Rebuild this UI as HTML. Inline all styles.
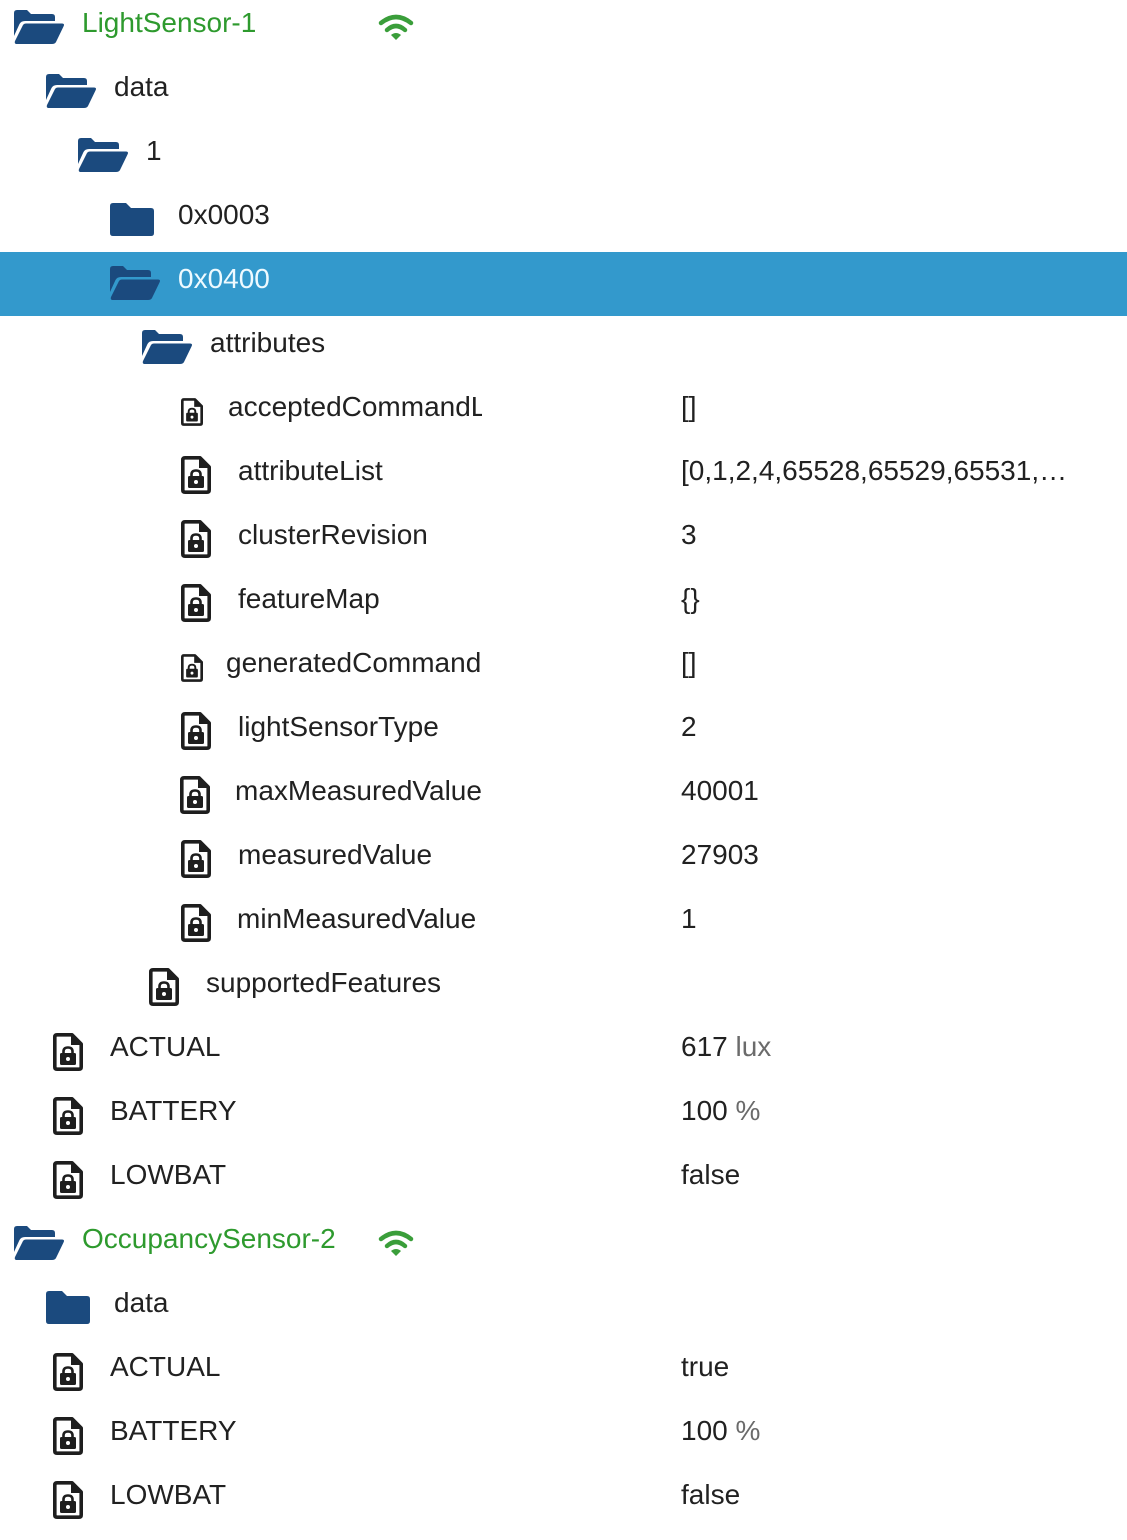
<!DOCTYPE html>
<html><head><meta charset="utf-8"><style>
html,body{margin:0;padding:0;background:#fff;width:1127px;height:1540px;overflow:hidden;position:relative;font-family:"Liberation Sans",sans-serif;}
.t{position:absolute;font-size:28px;line-height:64px;height:64px;padding-top:1px;color:#212121;white-space:nowrap;overflow:hidden;}
.g{color:#2e9a2e;}
.u{color:#6b6b6b;}
svg{position:absolute;}
.hl{position:absolute;left:0;top:252px;width:1127px;height:64px;background:#3399cc;}
</style></head><body>
<svg width="0" height="0" style="position:absolute">
<defs>
<symbol id="fo" viewBox="0 0 50 34"><path fill="#1b4a7e" d="M0 3Q0 0 3 0H13L17 4H38Q41 4 41 7V11H11Q7 11 5.5 14L0 26Z"/><path fill="#1b4a7e" d="M9 15Q10 13.5 12 13.5H48Q51 13.5 49.5 16.5L42 32Q41 34 38 34H3Q0 34 1 31Z"/></symbol>
<symbol id="fc" viewBox="0 0 44 33"><path fill="#1b4a7e" d="M0 3Q0 0 3 0H16L21 5H41Q44 5 44 8V30Q44 33 41 33H3Q0 33 0 30Z"/></symbol>
<symbol id="fl" viewBox="0 0 30 38"><path fill="none" stroke="#1e1e1e" stroke-width="3.6" stroke-linejoin="round" d="M4 1.8H19L28.2 11V34Q28.2 36.2 26 36.2H4Q1.8 36.2 1.8 34V4Q1.8 1.8 4 1.8Z"/><path fill="#1e1e1e" d="M18 2L28 12H18Z"/><path fill="none" stroke="#1e1e1e" stroke-width="2.6" d="M10.5 21V18.5Q10.5 14.5 15 14.5Q19.5 14.5 19.5 18.5V21"/><rect x="7" y="20" width="16" height="12" rx="1.5" fill="#1e1e1e"/><circle cx="15" cy="26" r="2" fill="#fff"/></symbol>
<symbol id="wf" viewBox="0 0 36 26"><path fill="none" stroke="#3a9e3a" stroke-width="4.5" stroke-linecap="round" d="M3 9Q18 -3 33 9"/><path fill="none" stroke="#3a9e3a" stroke-width="4.5" stroke-linecap="round" d="M9 16Q18 8 27 16"/><path fill="#3a9e3a" d="M13 21Q18 17 23 21L18 26Z"/></symbol>
</defs></svg>

<div class="hl"></div>

<svg style="left:14px;top:10px" width="50" height="34"><use href="#fo"/></svg>
<div class="t g" style="left:82px;top:-10px">LightSensor-1</div>
<svg style="left:378px;top:14px" width="36" height="26"><use href="#wf"/></svg>
<svg style="left:46px;top:74px" width="50" height="34"><use href="#fo"/></svg>
<div class="t" style="left:114px;top:54px">data</div>
<svg style="left:78px;top:138px" width="50" height="34"><use href="#fo"/></svg>
<div class="t" style="left:146px;top:118px">1</div>
<svg style="left:110px;top:203px" width="44" height="33"><use href="#fc"/></svg>
<div class="t" style="left:178px;top:182px">0x0003</div>
<svg style="left:110px;top:266px" width="50" height="34"><use href="#fo"/></svg>
<div class="t" style="left:178px;top:246px;color:#eefaff">0x0400</div>
<svg style="left:142px;top:330px" width="50" height="34"><use href="#fo"/></svg>
<div class="t" style="left:210px;top:310px">attributes</div>
<svg style="left:181px;top:398px" width="22" height="28"><use href="#fl"/></svg>
<div class="t" style="left:228px;top:374px;width:254px">acceptedCommandList</div>
<div class="t" style="left:681px;top:374px">[]</div>
<svg style="left:181px;top:456px" width="30" height="38"><use href="#fl"/></svg>
<div class="t" style="left:238px;top:438px">attributeList</div>
<div class="t" style="left:681px;top:438px;width:390px;text-overflow:ellipsis">[0,1,2,4,65528,65529,65531,65532,65533]</div>
<svg style="left:181px;top:520px" width="30" height="38"><use href="#fl"/></svg>
<div class="t" style="left:238px;top:502px">clusterRevision</div>
<div class="t" style="left:681px;top:502px">3</div>
<svg style="left:181px;top:584px" width="30" height="38"><use href="#fl"/></svg>
<div class="t" style="left:238px;top:566px">featureMap</div>
<div class="t" style="left:681px;top:566px">{}</div>
<svg style="left:181px;top:654px" width="22" height="28"><use href="#fl"/></svg>
<div class="t" style="left:226px;top:630px;width:256px">generatedCommandList</div>
<div class="t" style="left:681px;top:630px">[]</div>
<svg style="left:181px;top:712px" width="30" height="38"><use href="#fl"/></svg>
<div class="t" style="left:238px;top:694px">lightSensorType</div>
<div class="t" style="left:681px;top:694px">2</div>
<svg style="left:180px;top:776px" width="30" height="38"><use href="#fl"/></svg>
<div class="t" style="left:235px;top:758px;width:247px">maxMeasuredValue</div>
<div class="t" style="left:681px;top:758px">40001</div>
<svg style="left:181px;top:840px" width="30" height="38"><use href="#fl"/></svg>
<div class="t" style="left:238px;top:822px">measuredValue</div>
<div class="t" style="left:681px;top:822px">27903</div>
<svg style="left:181px;top:904px" width="30" height="38"><use href="#fl"/></svg>
<div class="t" style="left:237px;top:886px;width:245px">minMeasuredValue</div>
<div class="t" style="left:681px;top:886px">1</div>
<svg style="left:149px;top:968px" width="30" height="38"><use href="#fl"/></svg>
<div class="t" style="left:206px;top:950px">supportedFeatures</div>
<svg style="left:53px;top:1033px" width="30" height="38"><use href="#fl"/></svg>
<div class="t" style="left:110px;top:1014px">ACTUAL</div>
<div class="t" style="left:681px;top:1014px">617 <span class="u">lux</span></div>
<svg style="left:53px;top:1097px" width="30" height="38"><use href="#fl"/></svg>
<div class="t" style="left:110px;top:1078px">BATTERY</div>
<div class="t" style="left:681px;top:1078px">100 <span class="u">%</span></div>
<svg style="left:53px;top:1161px" width="30" height="38"><use href="#fl"/></svg>
<div class="t" style="left:110px;top:1142px">LOWBAT</div>
<div class="t" style="left:681px;top:1142px">false</div>
<svg style="left:14px;top:1226px" width="50" height="34"><use href="#fo"/></svg>
<div class="t g" style="left:82px;top:1206px">OccupancySensor-2</div>
<svg style="left:378px;top:1230px" width="36" height="26"><use href="#wf"/></svg>
<svg style="left:46px;top:1291px" width="44" height="33"><use href="#fc"/></svg>
<div class="t" style="left:114px;top:1270px">data</div>
<svg style="left:53px;top:1353px" width="30" height="38"><use href="#fl"/></svg>
<div class="t" style="left:110px;top:1334px">ACTUAL</div>
<div class="t" style="left:681px;top:1334px">true</div>
<svg style="left:53px;top:1417px" width="30" height="38"><use href="#fl"/></svg>
<div class="t" style="left:110px;top:1398px">BATTERY</div>
<div class="t" style="left:681px;top:1398px">100 <span class="u">%</span></div>
<svg style="left:53px;top:1481px" width="30" height="38"><use href="#fl"/></svg>
<div class="t" style="left:110px;top:1462px">LOWBAT</div>
<div class="t" style="left:681px;top:1462px">false</div>
</body></html>
